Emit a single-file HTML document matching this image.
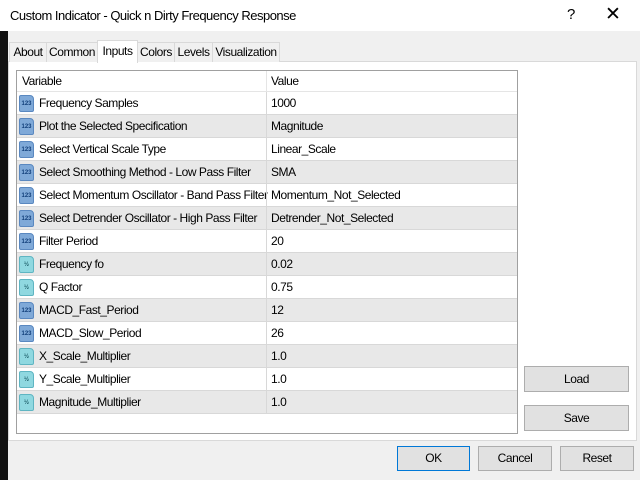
<!DOCTYPE html><html><head><style>
body{margin:0;width:640px;height:480px;overflow:hidden;background:#f0f0f0;font-family:"Liberation Sans",sans-serif;font-size:12px;letter-spacing:-0.45px;color:#000;position:relative}
.a{position:absolute}
.tab{position:absolute;top:42px;height:19px;border:1px solid #d9d9d9;border-bottom:none;background:#f0f0f0;text-align:center;line-height:19px;font-size:12px}
.row{position:absolute;left:17px;width:500px;height:22px;border-bottom:1px solid #d8d8d8;line-height:22px}
.row.g{background:#e8e8e8}
.row .n{position:absolute;left:22px}
.row .v{position:absolute;left:249px;border-left:1px solid #d8d8d8;padding-left:4px;top:0;bottom:0}
.ic{position:absolute;left:2px;top:3px;width:14px;height:16px;border-radius:2px 4px 2px 2px;font-size:6px;font-weight:bold;line-height:16px;text-align:center;letter-spacing:0}
.i1{background:#7fa9d8;color:#123f7a;border:1px solid #5a88c0;width:13px;height:15px}
.i2{background:#8fd8e0;color:#1e5f6a;border:1px solid #5fb5c2;width:13px;height:15px}
.btn{position:absolute;background:#e1e1e1;border:1px solid #adadad;text-align:center;font-size:12px}
</style></head><body>
<div class="a" style="left:0;top:0;width:640px;height:31px;background:#fff"></div>
<div class="a" style="left:0;top:31px;width:8px;height:449px;background:#111"></div>
<div class="a" style="left:10px;top:8px;font-size:13px;letter-spacing:-0.5px">Custom Indicator - Quick n Dirty Frequency Response</div>
<div class="a" style="left:567px;top:6px;font-size:15px">?</div>
<div class="a" style="left:605px;top:3px;font-size:19px">✕</div>
<div class="a" style="left:8px;top:61px;width:627px;height:378px;background:#fff;border:1px solid #d9d9d9"></div>
<div class="tab" style="left:9px;width:36px">About</div>
<div class="tab" style="left:46px;width:50px">Common</div>
<div class="tab" style="left:174px;width:37px">Levels</div>
<div class="tab" style="left:137px;width:36px">Colors</div>
<div class="tab" style="left:212px;width:66px">Visualization</div>
<div class="tab" style="left:97px;top:40px;height:22px;width:39px;background:#fff;line-height:20px">Inputs</div>
<div class="a" style="left:16px;top:70px;width:500px;height:362px;border:1px solid #a0a0a0;background:#fff"></div>
<div class="row" style="top:71px;height:20px;border-bottom:1px solid #e5e5e5;line-height:21px"><span style="position:absolute;left:5px">Variable</span><span class="v" style="border-left:1px solid #e5e5e5">Value</span></div>
<div class="row" style="top:92px"><span class="ic i1">123</span><span class="n">Frequency Samples</span><span class="v">1000</span></div>
<div class="row g" style="top:115px"><span class="ic i1">123</span><span class="n">Plot the Selected Specification</span><span class="v">Magnitude</span></div>
<div class="row" style="top:138px"><span class="ic i1">123</span><span class="n">Select Vertical Scale Type</span><span class="v">Linear_Scale</span></div>
<div class="row g" style="top:161px"><span class="ic i1">123</span><span class="n">Select Smoothing Method - Low Pass Filter</span><span class="v">SMA</span></div>
<div class="row" style="top:184px"><span class="ic i1">123</span><span class="n">Select Momentum Oscillator - Band Pass Filter</span><span class="v">Momentum_Not_Selected</span></div>
<div class="row g" style="top:207px"><span class="ic i1">123</span><span class="n">Select Detrender Oscillator - High Pass Filter</span><span class="v">Detrender_Not_Selected</span></div>
<div class="row" style="top:230px"><span class="ic i1">123</span><span class="n">Filter Period</span><span class="v">20</span></div>
<div class="row g" style="top:253px"><span class="ic i2">½</span><span class="n">Frequency fo</span><span class="v">0.02</span></div>
<div class="row" style="top:276px"><span class="ic i2">½</span><span class="n">Q Factor</span><span class="v">0.75</span></div>
<div class="row g" style="top:299px"><span class="ic i1">123</span><span class="n">MACD_Fast_Period</span><span class="v">12</span></div>
<div class="row" style="top:322px"><span class="ic i1">123</span><span class="n">MACD_Slow_Period</span><span class="v">26</span></div>
<div class="row g" style="top:345px"><span class="ic i2">½</span><span class="n">X_Scale_Multiplier</span><span class="v">1.0</span></div>
<div class="row" style="top:368px"><span class="ic i2">½</span><span class="n">Y_Scale_Multiplier</span><span class="v">1.0</span></div>
<div class="row g" style="top:391px"><span class="ic i2">½</span><span class="n">Magnitude_Multiplier</span><span class="v">1.0</span></div>
<div class="btn" style="left:524px;top:366px;width:103px;height:24px;line-height:24px">Load</div>
<div class="btn" style="left:524px;top:405px;width:103px;height:24px;line-height:24px">Save</div>
<div class="btn" style="left:397px;top:446px;width:71px;height:23px;line-height:23px;border:1px solid #0078d7">OK</div>
<div class="btn" style="left:478px;top:446px;width:72px;height:23px;line-height:23px">Cancel</div>
<div class="btn" style="left:560px;top:446px;width:72px;height:23px;line-height:23px">Reset</div>
</body></html>
